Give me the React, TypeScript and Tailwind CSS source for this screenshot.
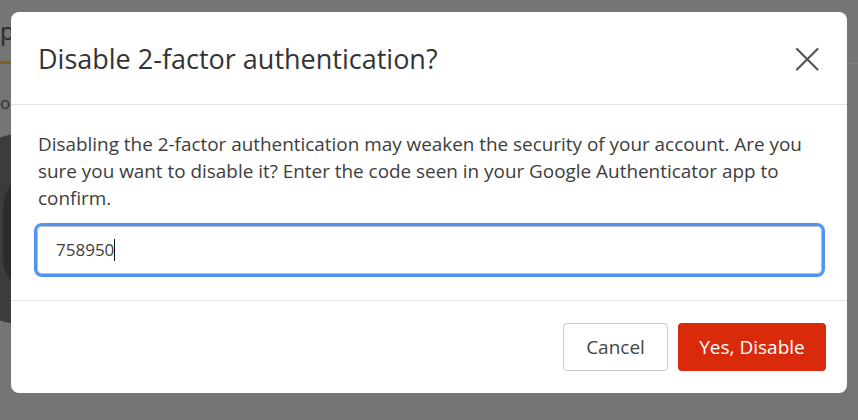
import React from "react";

export default function App() {
  return (
    <div
      className="relative w-[858px] h-[420px] overflow-hidden bg-[#757575]"
      style={{ fontFamily: '"Open Sans", "Noto Sans", sans-serif' }}
    >
      {/* dimmed page behind overlay */}
      <div className="absolute left-0 top-[19px] text-[24px] text-[#2a2a2a] leading-none">p</div>
      <div className="absolute left-0 top-[61px] w-[12px] h-[3px] bg-[#7a6422]" />
      <div className="absolute left-[846px] top-[63px] w-[12px] h-px bg-[#7e7e7e]" />
      <div className="absolute left-0 top-[94px] text-[17px] text-[#2f2f2f] leading-none">or</div>
      <div className="absolute left-[-40px] top-[134px] w-[120px] h-[190px] rounded-[60px] bg-[#3c3c3c]" />
      <div className="absolute left-[3px] top-[168px] w-[80px] h-[130px] rounded-full bg-[#2c2c2c]" />

      <div className="relative pl-[11px] pt-[12px]">
        <div className="w-[836px] h-[381px] bg-white rounded-[8px] flex flex-col">
          <div className="h-[93px] flex items-center justify-between pl-[27px] pr-[28px] border-b border-[#e3e3e3] pt-[2px]">
            <h2 className="text-[27px] text-[#333333] font-normal">Disable 2-factor authentication?</h2>
            <svg width="24" height="24" viewBox="0 0 24 24" className="text-[#555555]">
              <path d="M2 2 L22.5 22.5 M22.5 2 L2 22.5" stroke="currentColor" strokeWidth="2.2" strokeLinecap="round" />
            </svg>
          </div>
          <div className="h-[196px] px-[26px] pt-[26px] border-b border-[#e3e3e3]">
            <p className="text-[18.9px] leading-[27px] text-[#3d3d3d] pl-[1px]">
              Disabling the 2-factor authentication may weaken the security of your account. Are you sure you want to disable it? Enter the code seen in your Google Authenticator app to confirm.
            </p>
            <div className="mt-[14px] w-[785px] h-[48px] border border-[#bdbdbd] rounded-[5px] shadow-[0_0_0_3px_#4f93f7] flex items-center pl-[18px] text-[17px] text-[#3d3d3d]">
              <span>758950</span>
              <span className="inline-block w-px h-[22px] bg-[#111]" />
            </div>
          </div>
          <div className="flex-1 flex items-center justify-end gap-[10px] pr-[21px]">
            <button className="w-[105px] h-[48px] rounded-[4px] border border-[#c9c9c9] bg-white text-[19px] text-[#444444]">
              Cancel
            </button>
            <button className="w-[148px] h-[48px] rounded-[4px] bg-[#d92b0c] text-[19px] text-white">
              Yes, Disable
            </button>
          </div>
        </div>
      </div>
    </div>
  );
}
